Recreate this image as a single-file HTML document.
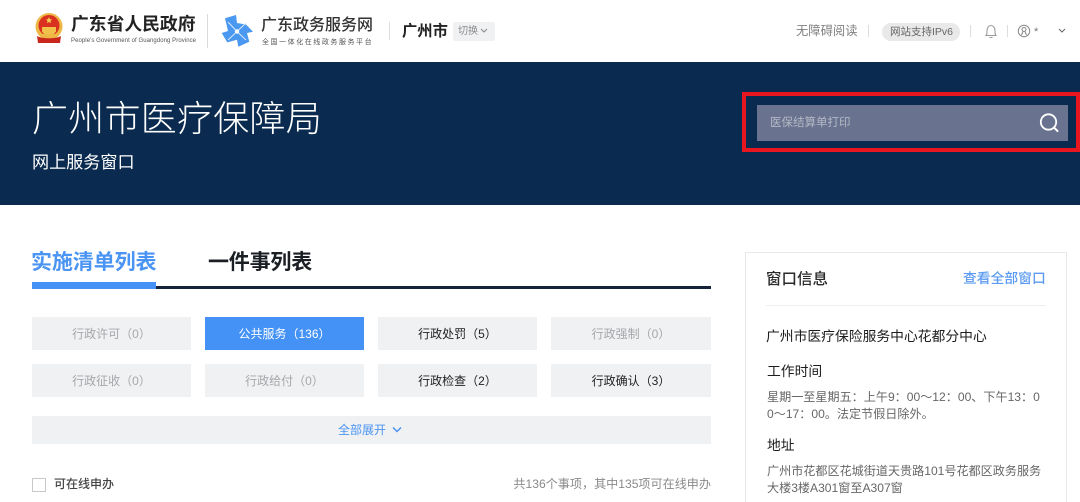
<!DOCTYPE html>
<html lang="zh"><head><meta charset="utf-8"><title>广州市医疗保障局</title>
<style>
html,body{margin:0;padding:0;background:#fff;width:1080px;height:502px;overflow:hidden}
body{font-family:"Liberation Sans","Noto Sans CJK SC",sans-serif}
#w{position:relative;width:1080px;height:502px;overflow:hidden}
.a{position:absolute;white-space:nowrap}
.t{position:absolute;height:33px;line-height:35px;text-align:center;font-size:12px;background:#f0f1f3;color:#222}
.g{color:#a5a7aa}
</style></head><body><div id="w">
<svg class="a" style="left:35px;top:13px" width="28" height="31" viewBox="0 0 28 31"><circle cx="14" cy="13.500" r="13.500" fill="#eeb845"/><circle cx="14" cy="12.500" r="10.500" fill="#d9301f"/><path d="M14 4l1 2.200 2.200.2-1.700 1.500.5 2.200-2-1.100-2 1.100.5-2.200-1.700-1.500 2.200-.2z" fill="#f4cc50"/><path d="M7 14h14v4.500l-2 2.500H9l-2-2.500z" fill="#f0c24c"/><path d="M2 23c5 3 19 3 24 0l-1 7H3z" fill="#c9281c"/><rect x="6" y="21" width="16" height="3.500" fill="#eeb845"/></svg>
<div class="a" style="left:71px;top:12px;font-size:17.800px;font-weight:700;line-height:24px;color:#222">广东省人民政府</div>
<div class="a" style="left:71px;top:36px;font-size:6px;line-height:11px;color:#555;letter-spacing:.07px">People's Government of Guangdong Province</div>
<div class="a" style="left:207px;top:14px;width:1px;height:34px;background:#d9d9d9"></div>
<svg class="a" style="left:221px;top:15px" width="33" height="33" viewBox="0 0 33 33"><path d="M4 3.300L15 0l1 8 9 1.500 7 7.200-6 1.300 2.300 8.700-11 5-1.300-7-9.700 2.700L.7 18l6.300-2z" fill="#4a98ef"/><g stroke="#d8e9fc" stroke-width="1"><path d="M16 16.500L7 7M16 16.500L25 8M16 16.500L25 25M16 16.500L7 25"/></g><circle cx="16" cy="16.500" r="2.200" fill="#fff"/></svg>
<div class="a" style="left:261px;top:15px;font-size:16px;line-height:22px;color:#333;font-weight:500">广东政务服务网</div>
<div class="a" style="left:262px;top:38px;font-size:7px;line-height:10px;color:#555;letter-spacing:1.550px">全国一体化在线政务服务平台</div>
<div class="a" style="left:389px;top:22px;width:1px;height:18px;background:#ddd"></div>
<div class="a" style="left:402px;top:21px;font-size:15.300px;font-weight:700;line-height:21px;color:#222">广州市</div>
<div class="a" style="left:453px;top:22px;width:42px;height:19px;background:#f0f1f3;border-radius:2px"></div>
<div class="a" style="left:458px;top:25px;font-size:10px;line-height:14px;color:#8c8c8c">切换</div>
<svg class="a" style="left:480px;top:28px" width="8" height="6"><path d="M1 1l3 3 3-3" fill="none" stroke="#888"/></svg>

<div class="a" style="left:796px;top:23px;font-size:12.300px;line-height:17px;color:#808080">无障碍阅读</div>
<div class="a" style="left:868px;top:25px;width:1px;height:12px;background:#ddd"></div>
<div class="a" style="left:882px;top:23px;width:78px;height:18px;border-radius:9px;background:#e9e9e9"></div>
<div class="a" style="left:890px;top:24px;font-size:10.500px;line-height:17px;color:#666">网站支持IPv6</div>
<div class="a" style="left:970px;top:25px;width:1px;height:12px;background:#ddd"></div>
<svg class="a" style="left:984px;top:24px" width="14" height="15" viewBox="0 0 14 15"><path d="M2 11.500c1-1 1-2 1-5s2-5 4-5 4 2 4 5 0 4 1 5zM5.500 13.500h3" fill="none" stroke="#999"/></svg>
<div class="a" style="left:1007px;top:25px;width:1px;height:12px;background:#ddd"></div>
<svg class="a" style="left:1017px;top:24px" width="14" height="14" viewBox="0 0 14 14"><circle cx="7" cy="7" r="5.700" fill="none" stroke="#888"/><circle cx="7" cy="5.500" r="2" fill="none" stroke="#888"/><path d="M4.500 11l1.500-3.500M9.500 11L8 7.500" fill="none" stroke="#888"/></svg>
<div class="a" style="left:1034px;top:26px;font-size:11px;line-height:12px;color:#777">*</div>
<svg class="a" style="left:1058px;top:28px" width="8" height="6"><path d="M1 1l3 3 3-3" fill="none" stroke="#666"/></svg>

<div class="a" style="left:0;top:62px;width:1080px;height:143px;background:#0a2a4f"></div>
<div class="a" style="left:32px;top:97px;font-size:36px;line-height:44px;color:#fff;letter-spacing:.25px;font-weight:300">广州市医疗保障局</div>
<div class="a" style="left:32px;top:152px;font-size:17.100px;line-height:21px;color:#fff">网上服务窗口</div>
<div class="a" style="left:742px;top:92px;width:330px;height:52px;border:4px solid #e8161f"></div>
<div class="a" style="left:757px;top:105px;width:311px;height:36px;background:#69738f"></div>
<div class="a" style="left:770px;top:115px;font-size:11.500px;line-height:17px;color:#b4b9c6">医保结算单打印</div>
<svg class="a" style="left:1038px;top:112px" width="22" height="22" viewBox="0 0 22 22"><circle cx="10.500" cy="10" r="7.700" fill="none" stroke="#fff" stroke-width="1.800"/><path d="M16 15.500l3.500 3.500" stroke="#fff" stroke-width="2" stroke-linecap="round"/></svg>

<div class="a" style="left:31px;top:248px;font-size:21px;font-weight:700;line-height:29px;color:#4a94f3;width:126px;letter-spacing:-.1px">实施清单列表</div>
<div class="a" style="left:208px;top:248px;font-size:21px;font-weight:700;line-height:29px;color:#1b1f24;letter-spacing:-.2px">一件事列表</div>
<div class="a" style="left:156px;top:286px;width:555px;height:3px;background:#14233a"></div>
<div class="a" style="left:32px;top:282px;width:124px;height:7px;background:#4492f5"></div>

<div class="t g" style="left:32px;top:317px;width:159px">行政许可（0）</div>
<div class="t" style="left:205px;top:317px;width:159px;background:#4492f5;color:#fff">公共服务（136）</div>
<div class="t" style="left:378px;top:317px;width:159px">行政处罚（5）</div>
<div class="t g" style="left:551px;top:317px;width:160px">行政强制（0）</div>
<div class="t g" style="left:32px;top:364px;width:159px">行政征收（0）</div>
<div class="t g" style="left:205px;top:364px;width:159px">行政给付（0）</div>
<div class="t" style="left:378px;top:364px;width:159px">行政检查（2）</div>
<div class="t" style="left:551px;top:364px;width:160px">行政确认（3）</div>
<div class="a" style="left:32px;top:416px;width:679px;height:28px;background:#f0f1f3"></div>
<div class="a" style="left:338px;top:422px;font-size:12px;line-height:17px;color:#4a94f3">全部展开</div>
<svg class="a" style="left:392px;top:426px" width="10" height="8"><path d="M1 1.500l4 4 4-4" fill="none" stroke="#4a94f3" stroke-width="1.500"/></svg>

<div class="a" style="left:32px;top:478px;width:12px;height:12px;border:1px solid #c9c9c9;background:#fff"></div>
<div class="a" style="left:54px;top:476px;font-size:12px;line-height:17px;color:#444;font-weight:500">可在线申办</div>
<div class="a" style="right:369px;top:476px;font-size:12.100px;line-height:17px;color:#8a8a8a">共136个事项，其中135项可在线申办</div>

<div class="a" style="left:745px;top:252px;width:320px;height:260px;border:1px solid #e8e8e8"></div>
<div class="a" style="left:766px;top:269px;font-size:15.500px;line-height:22px;color:#2a2a2a;font-weight:500">窗口信息</div>
<div class="a" style="left:963px;top:269px;font-size:13.800px;line-height:20px;color:#5b9bf3;font-weight:500">查看全部窗口</div>
<div class="a" style="left:766px;top:305px;width:280px;height:1px;background:#eee"></div>
<div class="a" style="left:766px;top:327px;font-size:13.800px;line-height:20px;color:#1c1c1c">广州市医疗保险服务中心花都分中心</div>
<div class="a" style="left:767px;top:362px;font-size:13.800px;line-height:20px;color:#1c1c1c">工作时间</div>
<div class="a" style="left:767px;top:389px;font-size:12.100px;line-height:17px;color:#666">星期一至星期五：上午9：00～12：00、下午13：0</div>
<div class="a" style="left:767px;top:406px;font-size:12.100px;line-height:17px;color:#666">0～17：00。法定节假日除外。</div>
<div class="a" style="left:767px;top:436px;font-size:13.800px;line-height:20px;color:#1c1c1c">地址</div>
<div class="a" style="left:767px;top:463px;font-size:12.100px;line-height:17px;color:#666">广州市花都区花城街道天贵路101号花都区政务服务</div>
<div class="a" style="left:767px;top:480px;font-size:12.100px;line-height:17px;color:#666">大楼3楼A301窗至A307窗</div>
</div></body></html>
